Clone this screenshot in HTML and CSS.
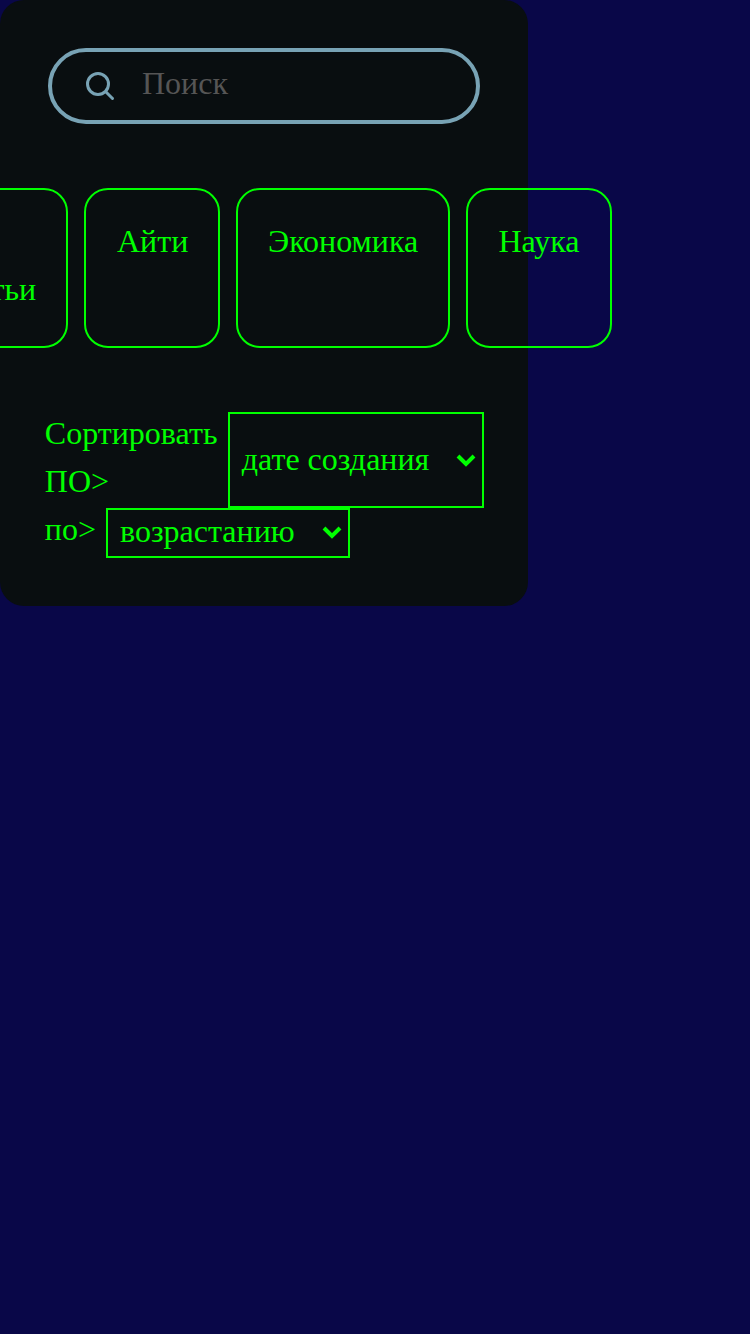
FILE: index.html
```html
<!DOCTYPE html>
<html lang="ru">
<head>
<meta charset="utf-8">
<title>Поиск</title>
<link rel="stylesheet" href="styles.css">
</head>
<body>
<section class="panel">
  <label class="search">
    <svg class="search-icon" viewBox="0 0 32 32" fill="none" stroke="currentColor" stroke-width="3" stroke-linecap="round">
      <circle cx="14" cy="14" r="10.5"/>
      <path d="M22 22l6.5 6.5"/>
    </svg>
    <input class="search-input" type="text" placeholder="Поиск">
  </label>
  <nav class="tags">
    <a class="tag">Все<br>статьи</a>
    <a class="tag">Айти</a>
    <a class="tag">Экономика</a>
    <a class="tag">Наука</a>
  </nav>
  <div class="sort">
    <div class="sort-row">
      <span class="sort-label">Сортировать ПО&gt;</span>
      <div class="select select-field">
        <span>дате создания</span>
        <svg class="chevron" viewBox="0 0 20 14" fill="none" stroke="currentColor" stroke-width="4"><path d="M2 2l8 8l8-8"/></svg>
      </div>
    </div>
    <div class="sort-row">
      <span class="sort-label">по&gt;</span>
      <div class="select select-order">
        <span>возрастанию</span>
        <svg class="chevron" viewBox="0 0 20 14" fill="none" stroke="currentColor" stroke-width="4"><path d="M2 2l8 8l8-8"/></svg>
      </div>
    </div>
  </div>
</section>
</body>
</html>
```

FILE: styles.css
```css
* { box-sizing: border-box; }
body {
  margin: 0;
  min-height: 100vh;
  overflow: hidden;
  background: #090748;
  color: #00ff00;
  font: 32px/48px "Liberation Serif", "Times New Roman", serif;
}
.panel {
  width: 528px;
  height: 605.5px;
  padding: 48px 44px 0;
  border-radius: 24px;
  background: #090e10;
}
.search {
  display: flex;
  align-items: center;
  height: 76px;
  margin: 0 4px;
  padding: 0 30px 0 32px;
  border: 4px solid #78a3b5;
  border-radius: 38px;
  color: #78a3b5;
}
.search-icon { width: 32px; height: 32px; flex: none; }
.search-input {
  flex: 1;
  min-width: 0;
  height: 42px;
  margin: 0 0 6px 26px;
  padding: 0;
  border: 0;
  outline: 0;
  background: none;
  color: inherit;
  font: inherit;
}
.search-input::placeholder { color: #555; opacity: 1; }
.tags {
  display: grid;
  grid-template-columns: 152px 136px 214px 146px;
  justify-content: center;
  gap: 16px;
  margin: 64px 0;
}
.tag {
  padding: 27px 0 33px 30.5px;
  border: 2px solid;
  border-radius: 24px;
  white-space: nowrap;
}
.tag:nth-child(2) { padding-left: 31px; }
.tag:nth-child(3) { padding-left: 30px; }
.sort-row { display: flex; }
.sort-label { flex: none; margin-top: -3px; padding-left: 0.8px; }
.sort-row:first-child .sort-label { width: 184px; }
.sort-row:last-child .sort-label { width: 62px; }
.select {
  display: flex;
  align-items: center;
  justify-content: space-between;
  flex: none;
  padding: 0 6px 0 12px;
  border: 2px solid;
  line-height: 36px;
}
.select-field { width: 256px; height: 96px; padding-left: 11.75px; }
.select-order { width: 244px; height: 50px; }
.select-field span { margin-top: -2px; }
.select-order span { margin-top: -4px; }
.chevron { width: 20px; height: 14px; flex: none; }
.select-field .chevron { margin-top: 2px; }
```
